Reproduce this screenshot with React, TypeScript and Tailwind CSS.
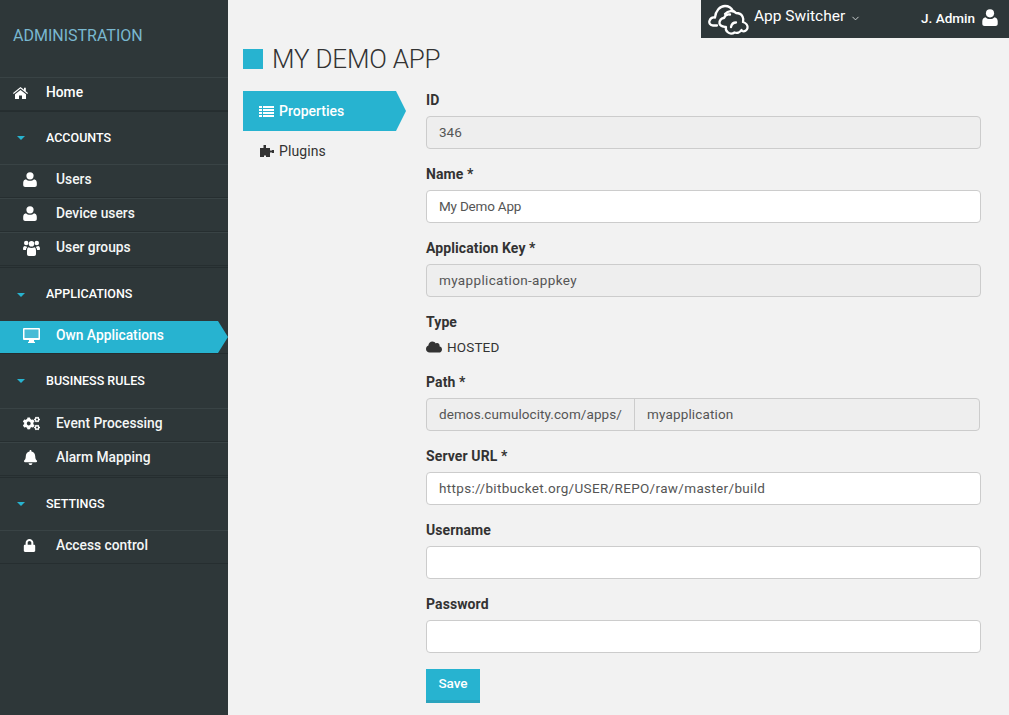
import type { ReactNode } from "react";
import { FaBell, FaCloud, FaCogs, FaLock } from "react-icons/fa";
import { ChevronDown } from "lucide-react";

function UserIcon({ className }: { className?: string }) {
  return (
    <svg width="14" height="15" viewBox="0 0 14 15" fill="currentColor" className={className}>
      <circle cx="7" cy="3.800" r="3.600" />
      <path d="M3 7.200C4 8.300 5.400 8.800 7 8.800s3-.5 4-1.600c1.600.3 2.800 1.500 2.800 3.500V13c0 1.200-.8 2-2 2H2.200C1 15 .2 14.200 .2 13v-2.300c0-2 1.200-3.200 2.800-3.500z" />
    </svg>
  );
}

function UsersIcon() {
  return (
    <svg width="17" height="16" viewBox="0 0 17 16" fill="currentColor">
      <circle cx="3.200" cy="3" r="2.200" />
      <circle cx="13.800" cy="3" r="2.200" />
      <circle cx="8.500" cy="3.800" r="2.800" />
      <path d="M0 9c0-2 .8-3 2-3 .6.5 1.300.7 2 .7L4 7.500C3.200 8.200 3 9 3 10H1C.4 10 0 9.600 0 9zM17 9c0-2-.8-3-2-3-.6.5-1.300.7-2 .7l0 .8c.8.7 1 1.500 1 2.500h2c.6 0 1-.4 1-1z" />
      <path d="M5.500 7.200C6.300 7.800 7.300 8 8.500 8s2.200-.2 3-.8C12.700 7.500 13 9 13 11v3c0 1-.7 2-1.800 2H5.800C4.700 16 4 15 4 14v-3c0-2 .3-3.500 1.500-3.800z" />
    </svg>
  );
}

function HomeIcon() {
  return (
    <svg width="15" height="12" viewBox="0 0 15 12" fill="currentColor">
      <path d="M7.500 0L11 2.800V.8h1.800v3.400L15 6l-.7.9L7.500 1.600 .7 6.900 0 6z" />
      <path d="M7.500 3L13 7.300V12H9V8.500H6V12H2V7.300z" />
    </svg>
  );
}

function DesktopIcon() {
  return (
    <svg width="17" height="15" viewBox="0 0 17 15">
      <rect x="0" y="0" width="17" height="12" rx="1" fill="#fff" />
      <rect x="1.500" y="1.500" width="14" height="8.500" fill="#48bcd6" />
      <path d="M6 12h5v1.800h1V15H5v-1.200h1z" fill="#fff" />
    </svg>
  );
}

function ListIcon() {
  return (
    <svg width="15" height="11" viewBox="0 0 15 11" fill="currentColor">
      <rect x="0" y="0" width="3" height="2" />
      <rect x="4" y="0" width="11" height="2" />
      <rect x="0" y="3" width="3" height="2" />
      <rect x="4" y="3" width="11" height="2" />
      <rect x="0" y="6" width="3" height="2" />
      <rect x="4" y="6" width="11" height="2" />
      <rect x="0" y="9" width="3" height="2" />
      <rect x="4" y="9" width="11" height="2" />
    </svg>
  );
}

function PuzzleIcon() {
  return (
    <svg width="14" height="12" viewBox="0 0 14 12" fill="currentColor">
      <path d="M3.500 0H6v3H10v2.500h2V5h2v3h-2v-.500h-2V12H6v-1.500H4V12H0V3h3.500z" />
    </svg>
  );
}

function GroupHeader({ label, height }: { label: string; height: string }) {
  return (
    <div className={`${height} flex items-center border-t border-[#252d2f]`}>
      <span className="ml-[17px] w-0 h-0 border-x-[4px] border-x-transparent border-t-[4px] border-t-[#27b3d0]" />
      <span className="ml-[21px] text-[12.5px] font-medium text-white">{label}</span>
    </div>
  );
}

function NavItem({ icon, label }: { icon: ReactNode; label: string }) {
  return (
    <div className="h-[34px] pb-[3px] flex items-center border-t border-[#394345] border-b border-b-[#262e30]">
      <span className="w-[56px] pl-[23px] flex items-center text-white">{icon}</span>
      <span className="text-[13.8px] font-medium text-[#f4f6f6]">{label}</span>
    </div>
  );
}

function Sidebar() {
  return (
    <aside className="w-[228px] shrink-0 bg-[#2e3739] min-h-[715px]">
      <div className="h-[77px] pt-[26px] pl-[13px] text-[16px] leading-[20px] text-[#79b8d0]">ADMINISTRATION</div>
      <div className="h-[34px] pb-[3px] flex items-center border-t border-[#394345] border-b border-b-[#262e30]">
        <span className="w-[46px] pl-[13px] flex items-center text-white"><HomeIcon /></span>
        <span className="text-[13.8px] font-medium text-white">Home</span>
      </div>
      <GroupHeader label="ACCOUNTS" height="h-[53px]" />
      <NavItem icon={<UserIcon />} label="Users" />
      <NavItem icon={<UserIcon />} label="Device users" />
      <NavItem icon={<UsersIcon />} label="User groups" />
      <div className="h-[1px]" />
      <GroupHeader label="APPLICATIONS" height="h-[54px]" />
      <div className="h-[32px] pb-[4px] flex items-center bg-[#27b3d0] [clip-path:polygon(0_0,218px_0,228px_50%,218px_100%,0_100%)]">
        <span className="w-[56px] pl-[23px] flex items-center"><DesktopIcon /></span>
        <span className="text-[13.8px] font-medium text-white">Own Applications</span>
      </div>
      <GroupHeader label="BUSINESS RULES" height="h-[55px]" />
      <NavItem icon={<FaCogs size={17} />} label="Event Processing" />
      <NavItem icon={<FaBell size={15} />} label="Alarm Mapping" />
      <div className="h-[1px]" />
      <GroupHeader label="SETTINGS" height="h-[53px]" />
      <NavItem icon={<FaLock size={13} />} label="Access control" />
    </aside>
  );
}

function CloudLogo() {
  return (
    <svg width="42" height="33" viewBox="0 0 42 33" fill="none" stroke="#fff" strokeWidth="2.300" strokeLinejoin="round" strokeLinecap="round">
      <path d="M9 22.500H5C2 22.500 .8 20 1.500 17.800 2.300 15.500 4.500 14 7 14.500 7.500 8 12 3 17 3c3.500 0 6.500 2 8 5" />
      <path d="M17 11c3-3.500 8.500-4 11-1 2 0 5 .5 6.500 3.500 1 2 1 4 .5 5.500 3 1 5 3.500 4.500 6-.5 2.500-3 4-5.500 3" />
      <path d="M33.500 27c-1.500 2.500-4.500 3.500-7 2.500-2 1.500-5 1.500-7-.5-1.500-1.500-2-3.500-1.500-5-2.500-.5-6-.5-6.500-3.500-.5-3 2-5.500 4.500-5.500 1-2.500 3.500-4 6-3.500" />
      <path d="M23 24c.5-2.500 2.500-4.500 5-4.500" />
    </svg>
  );
}

function TopBar() {
  return (
    <div className="self-end shrink-0 w-[308px] h-[38px] bg-[#2e3739] flex items-center text-white">
      <span className="ml-[7px] flex items-center"><CloudLogo /></span>
      <span className="ml-[4px] text-[15.5px] leading-none pb-[4px]">App Switcher</span>
      <ChevronDown size={11} className="ml-[5px] mb-[2px] text-[#d8dcdc]" />
      <span className="ml-auto text-[13.5px] font-medium pb-[1px]">J. Admin</span>
      <UserIcon className="ml-[7px] mr-[11px] mb-[4px] w-[16px] h-[17px]" />
    </div>
  );
}

function Field({ label, height = "h-[74px]", children }: { label: string; height?: string; children: ReactNode }) {
  return (
    <div className={height}>
      <div className="h-[20px] text-[14px] leading-[20px] font-bold tracking-[0.1px] text-[#333]">{label}</div>
      <div className="mt-[6px]">{children}</div>
    </div>
  );
}

function TextBox({ value, disabled, spacing = "" }: { value?: string; disabled?: boolean; spacing?: string }) {
  const fill = disabled ? "bg-[#eeeeee]" : "bg-white";
  return (
    <div className={`h-[33px] px-[12px] flex items-center rounded-[4px] border border-[#cccccc] text-[13.5px] text-[#555] ${fill} ${spacing}`}>
      {value}
    </div>
  );
}

function PropertiesForm() {
  return (
    <form className="w-[555px] ml-[20px] -mt-[1px]">
      <Field label="ID"><TextBox value="346" disabled /></Field>
      <Field label="Name *"><TextBox value="My Demo App" spacing="tracking-[-0.2px]" /></Field>
      <Field label="Application Key *"><TextBox value="myapplication-appkey" disabled spacing="tracking-[0.35px]" /></Field>
      <Field label="Type" height="h-[60px]">
        <div className="flex items-center gap-[5px] text-[13.5px] text-[#333] tracking-[0.15px] leading-[20px] -mt-[1px]">
          <FaCloud size={16} className="text-[#333]" />
          HOSTED
        </div>
      </Field>
      <Field label="Path *">
        <div className="w-[554px] h-[33px] flex rounded-[4px] border border-[#cccccc] bg-[#eeeeee] text-[13.5px] text-[#555]">
          <div className="w-[208px] pl-[12px] flex items-center border-r border-[#cccccc] tracking-[0.08px]">demos.cumulocity.com/apps/</div>
          <div className="pl-[12px] flex items-center tracking-[0.15px]">myapplication</div>
        </div>
      </Field>
      <Field label="Server URL *"><TextBox value="https://bitbucket.org/USER/REPO/raw/master/build" spacing="tracking-[0.33px]" /></Field>
      <Field label="Username"><TextBox /></Field>
      <Field label="Password"><TextBox /></Field>
      <button type="button" className="block mt-[1px] w-[54px] h-[34px] pb-[2px] bg-[#27b3d0] border-b-[3px] border-[#2aa3bd] text-[13.5px] font-medium text-white">
        Save
      </button>
    </form>
  );
}

export default function App() {
  return (
    <div className="w-[1009px] h-[715px] overflow-hidden flex bg-[#f2f2f2] font-['Roboto',sans-serif]">
      <Sidebar />
      <main className="flex-1 flex flex-col">
        <TopBar />
        <div className="ml-[15px] mt-[11px] h-[20px] flex items-center">
          <span className="w-[20px] h-[20px] bg-[#27b3d0]" />
          <h1 className="ml-[9px] text-[26px] leading-none font-light tracking-[-0.2px] text-[#333]">MY DEMO APP</h1>
        </div>
        <div className="ml-[15px] mt-[22px] flex">
          <nav className="w-[163px] shrink-0">
            <div className="h-[40px] pl-[16px] flex items-center gap-[5px] bg-[#27b3d0] text-[14px] font-medium text-white [clip-path:polygon(0_0,153px_0,163px_50%,153px_100%,0_100%)]">
              <ListIcon />
              Properties
            </div>
            <div className="h-[40px] pl-[17px] flex items-center gap-[5px] text-[14px] tracking-[0.1px] text-[#333]">
              <PuzzleIcon />
              Plugins
            </div>
          </nav>
          <PropertiesForm />
        </div>
      </main>
    </div>
  );
}
